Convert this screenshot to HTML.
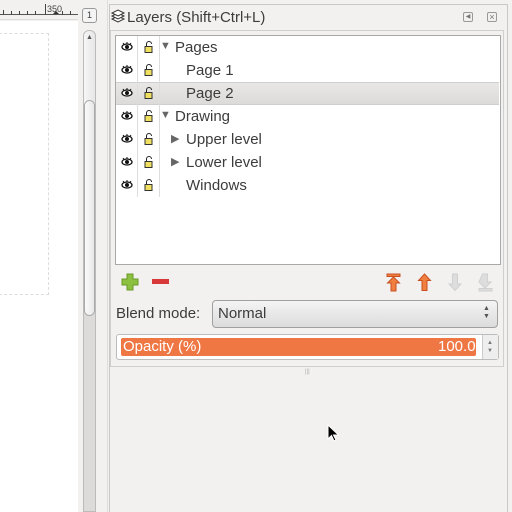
<!DOCTYPE html>
<html><head><style>
*{margin:0;padding:0;box-sizing:border-box}
body{width:512px;height:512px;background:#f2f1f0;position:relative;overflow:hidden;font-family:"Liberation Sans","DejaVu Sans",sans-serif;font-size:15px;color:#3c3c3c}
.a{position:absolute}
.row{position:absolute;left:116px;width:383px;height:23px}
.t{position:absolute;font-size:15px;color:#3c3c3c}
.tri{position:absolute;font-size:11px;color:#666}
</style></head><body>
<div class="a" style="left:0;top:0;width:80px;height:20px;background:#f2f1f0;border-bottom:1px solid #ddd"></div>
<div class="a" style="left:0;top:14px;width:80px;height:1px;background:#555"></div>
<svg class="a" style="left:0;top:0" width="80" height="20"><g stroke="#444">
<line x1="3.5" y1="10" x2="3.5" y2="15"/><line x1="11.5" y1="11" x2="11.5" y2="15"/><line x1="19.5" y1="11" x2="19.5" y2="15"/><line x1="27.5" y1="11" x2="27.5" y2="15"/><line x1="35.5" y1="11" x2="35.5" y2="15"/><line x1="45.5" y1="4" x2="45.5" y2="15"/><line x1="62.5" y1="11" x2="62.5" y2="15"/><line x1="70.5" y1="11" x2="70.5" y2="15"/></g>
<text x="47" y="12" font-size="9" fill="#444" font-family="Liberation Sans">350</text>
<path d="M53 14 l3 -3 l3 3z" fill="#333"/></svg>
<div class="a" style="left:0;top:21px;width:78px;height:491px;background:#fff"></div>
<div class="a" style="left:-1px;top:33px;width:50px;height:262px;border:1px dashed #ddd"></div>
<div class="a" style="left:78px;top:0;width:31px;height:512px;background:#f2f1f0"></div>
<div class="a" style="left:82px;top:8px;width:15px;height:15px;border:1px solid #999;border-radius:3px;background:#f4f4f4;font-size:9px;text-align:center;line-height:13px">1</div>
<div class="a" style="left:83px;top:30px;width:13px;height:482px;background:#dcdbda;border:1px solid #bbb;border-radius:6px 6px 0 0"></div>
<div class="a" style="left:84px;top:31px;width:11px;height:84px;background:linear-gradient(90deg,#f6f6f6,#e6e6e6);border-radius:5px 5px 0 0"></div>
<div class="a" style="left:84px;top:100px;width:11px;height:216px;background:linear-gradient(90deg,#fafafa,#e8e8e8);border:1px solid #aaa;border-radius:6px"></div>
<div class="a" style="left:86px;top:34px;font-size:7px;color:#555">▲</div>
<div class="a" style="left:107px;top:0;width:1px;height:512px;background:#ddd"></div>
<div class="a" style="left:109px;top:4px;width:399px;height:508px;border-left:1px solid #c8c8c8;border-right:1px solid #c8c8c8;border-top:1px solid #c8c8c8"></div>
<svg class="a" style="left:110px;top:9px" width="16" height="16"><g fill="#fff" stroke="#333"><path d="M2 10 l6 3 l6 -3 l-6 -3z"/><path d="M2 7 l6 3 l6 -3 l-6 -3z"/><path d="M2 4 l6 3 l6 -3 l-6 -3z"/></g></svg>
<div class="t" style="left:127px;top:9px">Layers (Shift+Ctrl+L)</div>
<div class="a" style="left:463px;top:12px;width:10px;height:10px;border:1px solid #999;border-radius:2px;font-size:6px;line-height:8px;text-align:center;color:#777">◀</div>
<div class="a" style="left:487px;top:12px;width:10px;height:10px;border:1px solid #999;border-radius:2px;font-size:9px;line-height:8px;text-align:center;color:#777">×</div>
<div class="a" style="left:110px;top:30px;width:394px;height:337px;border:1px solid #cfcfcf"></div>
<div class="a" style="left:115px;top:35px;width:386px;height:230px;background:#fff;border:1px solid #a8a8a8"></div>
<div class="row" style="top:82px;background:linear-gradient(#e8e7e6,#dcdbda);border-top:1px solid #cfcfcf;border-bottom:1px solid #cfcfcf"></div>
<div class="a" style="left:137px;top:36px;width:1px;height:161px;background:#ddd"></div>
<div class="a" style="left:159px;top:36px;width:1px;height:161px;background:#ddd"></div>
<div class="t" style="left:175px;top:39px">Pages</div>
<div class="t" style="left:186px;top:62px">Page 1</div>
<div class="t" style="left:186px;top:85px">Page 2</div>
<div class="t" style="left:175px;top:108px">Drawing</div>
<div class="t" style="left:186px;top:131px">Upper level</div>
<div class="t" style="left:186px;top:154px">Lower level</div>
<div class="t" style="left:186px;top:177px">Windows</div>
<div class="tri" style="left:160px;top:40px">▼</div>
<div class="tri" style="left:160px;top:109px">▼</div>
<div class="tri" style="left:171px;top:132px">▶</div>
<div class="tri" style="left:171px;top:155px">▶</div>
<svg class="a" style="left:118px;top:36px" width="40" height="161">
<defs><g id="r"><ellipse cx="9" cy="11" rx="5" ry="3" fill="#fff" stroke="#111" stroke-width="1.3"/><circle cx="9" cy="11" r="2" fill="#111"/><path d="M5 7 l1 1.5 M9 6 v2 M13 7 l-1 1.5" stroke="#111"/>
<path d="M28.5 11 v-3 a2.5 2.5 0 0 1 5 0" fill="none" stroke="#222"/><rect x="27" y="10.5" width="7" height="6" fill="#f0e060" stroke="#333"/></g></defs>
<use href="#r" y="0"/><use href="#r" y="23"/><use href="#r" y="46"/><use href="#r" y="69"/><use href="#r" y="92"/><use href="#r" y="115"/><use href="#r" y="138"/>
</svg>
<svg class="a" style="left:120px;top:272px" width="380" height="22">
<path d="M7 2h6v5h5v6h-5v5h-6v-5h-5v-6h5z" fill="#8cc040" stroke="#6a9a2a"/>
<rect x="32" y="7" width="17" height="5" fill="#d83838"/>
<g fill="#f08040" stroke="#c85020"><rect x="267" y="2" width="13" height="2.5"/><path d="M273.5 5 l6 6 h-3.5 v8 h-5 v-8 h-3.5z"/><path d="M304.5 2 l6 6.5 h-3.5 v10 h-5 v-10 h-3.5z"/></g>
<g fill="#ddd" stroke="#d0d0d0"><path d="M332.5 2 h5 v10 h3.5 l-6 6.5 l-6 -6.5 h3.5z"/><path d="M362.5 2 h5 v8 h3.5 l-6 6 l-6 -6z"/><rect x="359" y="16.5" width="13" height="2.5"/></g>
</svg>
<div class="t" style="left:116px;top:305px">Blend mode:</div>
<div class="a" style="left:212px;top:300px;width:286px;height:28px;border:1px solid #a0a0a0;border-radius:4px;background:linear-gradient(#f4f4f4,#dcdcdc)"></div>
<div class="t" style="left:218px;top:305px">Normal</div>
<div class="a" style="left:483px;top:305px;font-size:7px;line-height:8px;color:#555">▲<br>▼</div>
<div class="a" style="left:116px;top:334px;width:383px;height:26px;border:1px solid #bcbcbc;border-radius:3px;background:#fff"></div>
<div class="a" style="left:121px;top:338px;width:355px;height:18px;background:#ef7744;border-radius:2px"></div>
<div class="t" style="left:123px;top:338px;color:#fff">Opacity (%)</div>
<div class="t" style="left:438px;top:338px;color:#fff">100.0</div>
<div class="a" style="left:482px;top:335px;width:16px;height:24px;background:#eee;border-left:1px solid #ccc"></div>
<div class="a" style="left:487px;top:339px;font-size:6px;line-height:8px;color:#777">▲<br>▼</div>
<div class="a" style="left:305px;top:369px;font-size:6px;color:#aaa">|||</div>
<svg class="a" style="left:327px;top:424px" width="14" height="20"><path d="M1 1 v14 l3.5 -3.5 l2.5 5.5 l2 -1 l-2.5 -5 h5z" fill="#000" stroke="#fff" stroke-width="1"/></svg>
</body></html>
